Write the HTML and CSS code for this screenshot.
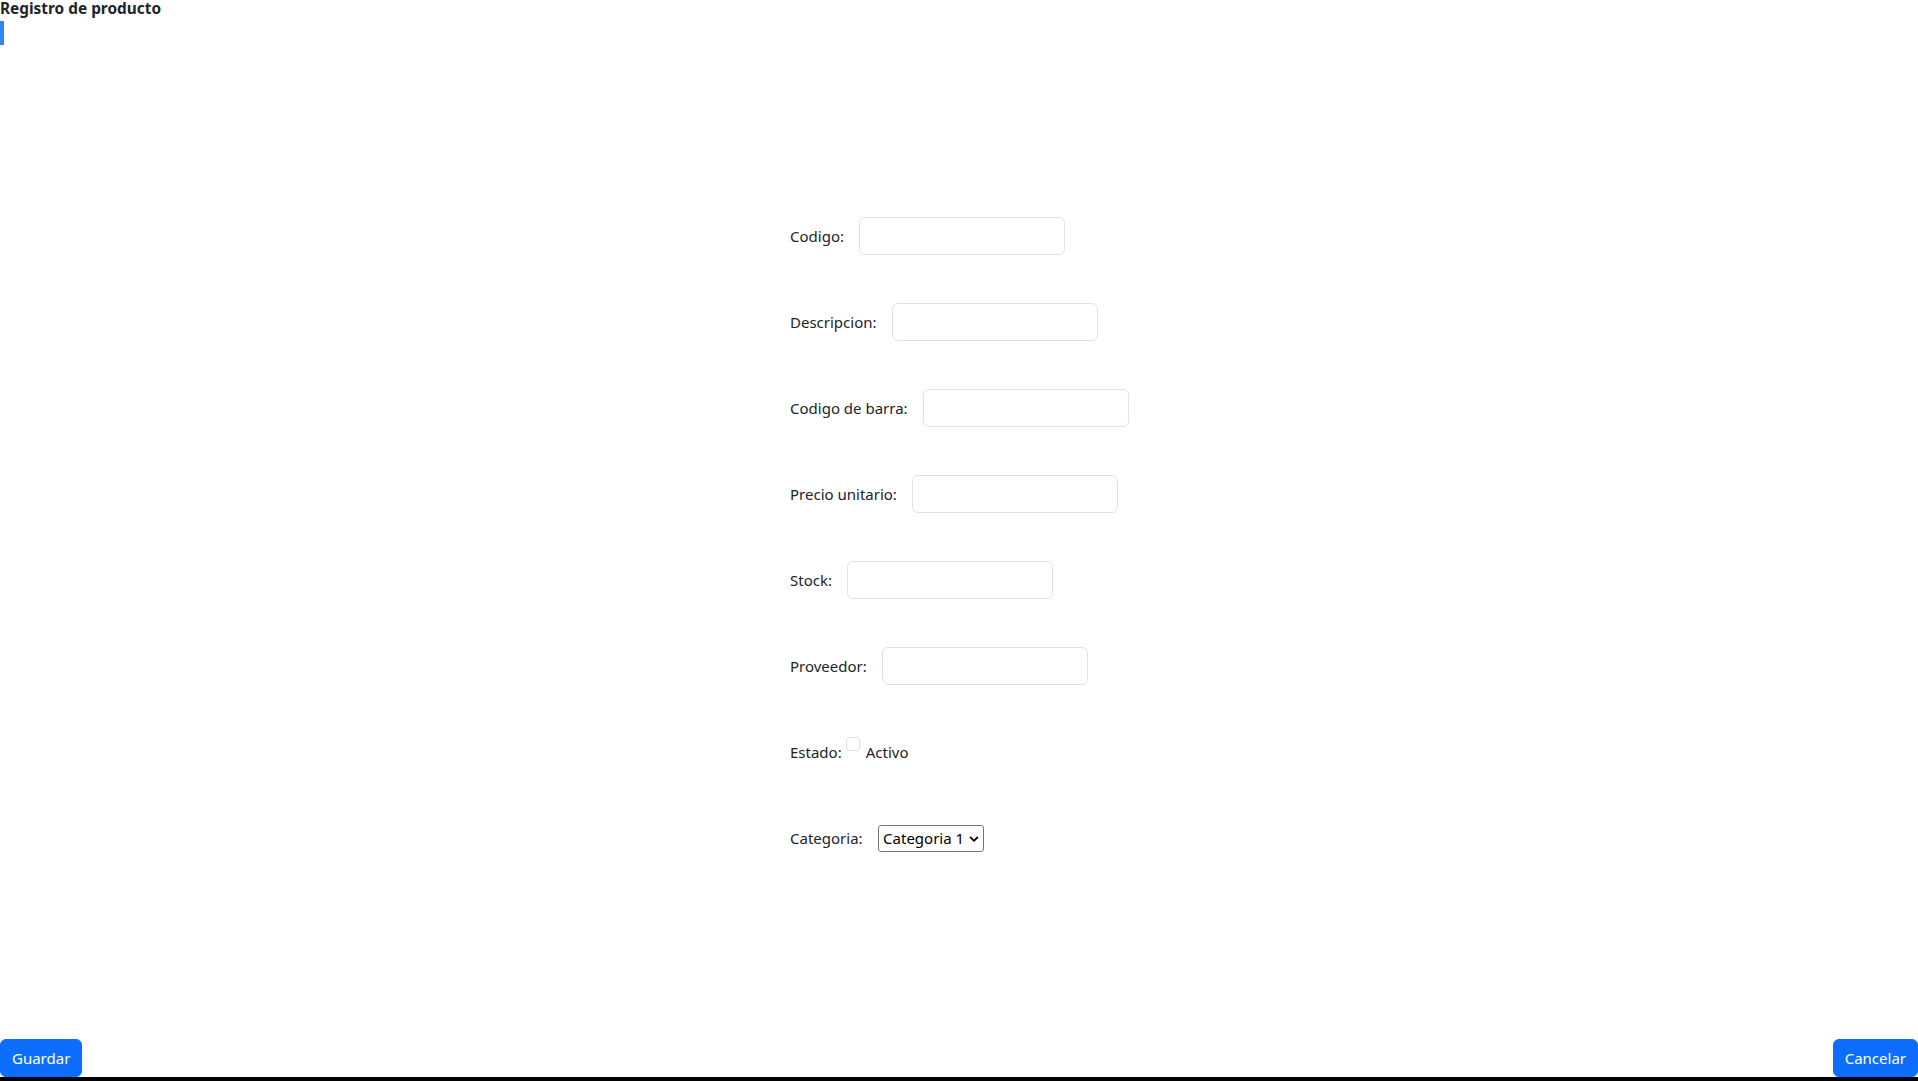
FILE: index.html
```html
<!DOCTYPE html>
<html lang="es">
<head>
<meta charset="utf-8">
<title>Registro de producto</title>
<link rel="stylesheet" href="styles.css">
</head>
<body>
<div class="page">
  <header class="header">
    <h1 class="title">Registro de producto</h1>
    <div class="accent"></div>
  </header>
  <main class="main">
    <form class="form">
      <div class="row"><label class="lbl">Codigo:</label><input class="field" type="text"></div>
      <div class="row"><label class="lbl">Descripcion:</label><input class="field" type="text"></div>
      <div class="row"><label class="lbl">Codigo de barra:</label><input class="field" type="text"></div>
      <div class="row"><label class="lbl">Precio unitario:</label><input class="field" type="text"></div>
      <div class="row"><label class="lbl">Stock:</label><input class="field" type="text"></div>
      <div class="row"><label class="lbl">Proveedor:</label><input class="field" type="text"></div>
      <div class="row"><span class="lbl lbl-tight">Estado:</span><input class="check" type="checkbox"><span class="check-text">Activo</span></div>
      <div class="row"><label class="lbl">Categoria:</label>
        <span class="select-wrap">
          <select class="select"><option>Categoria 1</option></select>
          <svg class="chev" width="10" height="8" viewBox="0 0 10 8"><path d="M1.2 2 L5 5.8 L8.8 2" fill="none" stroke="#000" stroke-width="1.8"/></svg>
        </span>
      </div>
    </form>
  </main>
  <footer class="footer">
    <button class="btn" type="button">Guardar</button>
    <button class="btn" type="button">Cancelar</button>
  </footer>
  <div class="edge"></div>
</div>
</body>
</html>
```
FILE: styles.css
```css
* { box-sizing: border-box; }
html, body { margin: 0; padding: 0; height: 100%; }
body {
  font-family: "Noto Sans", "Open Sans", sans-serif;
  font-size: 15px;
  color: #212529;
  background: #fff;
}
.page {
  display: flex;
  flex-direction: column;
  height: 100vh;
}
.header { padding: 0; }
.title {
  margin: 0;
  font-size: 15.4px;
  font-weight: 700;
  line-height: 17px;
}
.accent {
  width: 4px;
  height: 24px;
  margin-top: 4px;
  background: #2f86f6;
}
.main {
  flex: 1;
  display: flex;
  justify-content: center;
}
.form {
  width: 338px;
  padding-top: 172px;
}
.row {
  display: flex;
  align-items: center;
  height: 38px;
  margin-bottom: 48px;
}
.lbl {
  margin-right: 15.5px;
  white-space: nowrap;
}
.lbl-tight { margin-right: 4px; }
.field {
  width: 206px;
  height: 38px;
  border: 1px solid #dee2e6;
  border-radius: 6px;
  padding: 6px 12px;
  font: inherit;
  background: #fff;
}
.check {
  appearance: none;
  -webkit-appearance: none;
  width: 14px;
  height: 14px;
  margin: -17px 6px 0 0;
  border: 1px solid #dee2e6;
  border-radius: 3px;
  background: #fff;
}
.select-wrap {
  position: relative;
  display: inline-block;
}
.select {
  appearance: none;
  -webkit-appearance: none;
  width: 106px;
  height: 27px;
  padding: 0 18px 0 4px;
  border: 1px solid #767676;
  border-radius: 3px;
  background: #fff;
  font: inherit;
  color: #000;
}
.chev {
  position: absolute;
  right: 5px;
  top: 10px;
  pointer-events: none;
}
.footer {
  display: flex;
  justify-content: space-between;
  align-items: flex-end;
}
.btn {
  height: 38px;
  padding: 6px 11px;
  border: 1px solid #0d6efd;
  border-radius: 6px;
  background: #0d6efd;
  color: #fff;
  font: inherit;
  line-height: 24px;
}
.edge {
  height: 4px;
  background: #000;
}
```
